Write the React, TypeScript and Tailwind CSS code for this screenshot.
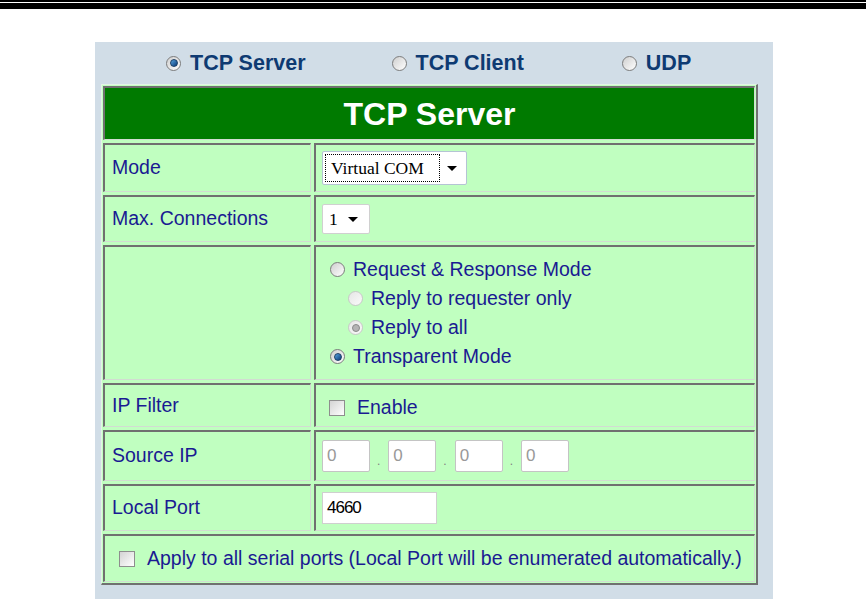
import React from "react";

function Radio({ checked = false, disabled = false }: { checked?: boolean; disabled?: boolean }) {
  return (
    <span
      className={`relative inline-flex h-[15px] w-[15px] shrink-0 items-center justify-center rounded-full border ${
        disabled
          ? "border-[#c8c8c8] bg-gradient-to-br from-[#e6e6e6] to-[#fafafa]"
          : "border-[#7c7c7c] bg-gradient-to-br from-[#cfcfcf] to-[#ffffff]"
      }`}
    >
      {checked && (
        <span
          className={`h-[8px] w-[8px] rounded-full border ${
            disabled
              ? "border-[#8a8a8a] bg-[#b4b4b4]"
              : "border-[#1c3f66] bg-gradient-to-br from-[#5aa6e0] to-[#0a3b78]"
          }`}
        />
      )}
    </span>
  );
}

function Checkbox() {
  return (
    <span className="inline-block h-[16px] w-[16px] shrink-0 border border-[#8e8e8e] bg-gradient-to-br from-[#d4d4d4] to-[#ffffff]" />
  );
}

function Arrow() {
  return <span className="inline-block h-0 w-0 border-x-[5px] border-t-[5px] border-x-transparent border-t-black" />;
}

function Cell({ children, className = "" }: { children?: React.ReactNode; className?: string }) {
  return (
    <div
      className={`border-l-2 border-t-2 border-r border-b border-l-[#707070] border-t-[#707070] border-r-[#d2dcd2] border-b-[#d2dcd2] bg-[#c0ffc0] ${className}`}
    >
      {children}
    </div>
  );
}

function IpBox() {
  return (
    <div className="flex h-[32px] w-[48px] items-center rounded-[2px] border border-[#c4c4c4] bg-white pl-[4px] text-[17px] text-[#999999]">
      0
    </div>
  );
}

function IpDot() {
  return <span className="ml-[7px] mr-[8px] mt-[10px] text-[12px] text-[#808080]">.</span>;
}

export default function App() {
  const label = "flex items-center pl-[7px] text-[19.5px] text-[#1a1a92]";
  return (
    <div className="min-h-[599px] w-[866px] bg-white font-['Liberation_Sans',Arial,sans-serif]">
      <div className="h-[2px] bg-black" />
      <div className="h-[1px] bg-white" />
      <div className="h-[6px] bg-black" />

      <div className="ml-[95px] mt-[33px] h-[557px] w-[678px] bg-[#d1dde7] pt-[8px]">
        <div className="flex h-[26px] items-center text-[21.5px] font-bold text-[#0e3a72]">
          <div className="ml-[71px] flex items-center gap-[9px]">
            <Radio checked />
            <span>TCP Server</span>
          </div>
          <div className="ml-[86px] flex items-center gap-[9px]">
            <Radio />
            <span>TCP Client</span>
          </div>
          <div className="ml-[98px] flex items-center gap-[9px]">
            <Radio />
            <span>UDP</span>
          </div>
        </div>

        <div className="ml-[6px] mt-[8px] w-[657px] border-l border-t border-r-2 border-b-2 border-l-[#e4f4e4] border-t-[#e4f4e4] border-r-[#707070] border-b-[#707070] bg-[#c0ffc0] p-[1px]">
          <div className="grid grid-cols-[208px_1fr] gap-[3px]">
            <Cell className="col-span-2 flex h-[54px] items-center justify-center !bg-[#007a00] text-[32px] font-bold text-white">
              TCP Server
            </Cell>

            <Cell className={`h-[49px] ${label}`}>Mode</Cell>
            <Cell className="flex h-[49px] items-center pl-[6px]">
              <div className="flex h-[34px] w-[145px] items-center rounded-[2px] border border-[#b5c4d4] bg-white px-[2px]">
                <div className="flex h-[28px] w-[115px] items-center border border-dotted border-black pl-[5px] font-['Liberation_Serif',serif] text-[17.5px] text-black">
                  Virtual COM
                </div>
                <div className="mx-auto flex items-center">
                  <Arrow />
                </div>
              </div>
            </Cell>

            <Cell className={`h-[47px] ${label}`}>Max. Connections</Cell>
            <Cell className="flex h-[47px] items-center pl-[6px]">
              <div className="flex h-[30px] w-[48px] items-center gap-[10px] rounded-[2px] border border-[#d0d0d0] bg-white pl-[6px] font-['Liberation_Serif',serif] text-[17.5px] text-black">
                1
                <Arrow />
              </div>
            </Cell>

            <Cell className="h-[135px]" />
            <Cell className="flex h-[135px] flex-col justify-center gap-[8px] pl-[14px] text-[19.5px] leading-[21px] text-[#1a1a92]">
              <div className="flex items-center gap-[8px]">
                <Radio />
                <span>Request &amp; Response Mode</span>
              </div>
              <div className="ml-[18px] flex items-center gap-[8px]">
                <Radio disabled />
                <span>Reply to requester only</span>
              </div>
              <div className="ml-[18px] flex items-center gap-[8px]">
                <Radio checked disabled />
                <span>Reply to all</span>
              </div>
              <div className="flex items-center gap-[8px]">
                <Radio checked />
                <span>Transparent Mode</span>
              </div>
            </Cell>

            <Cell className={`h-[44px] ${label}`}>IP Filter</Cell>
            <Cell className="flex h-[44px] items-center gap-[12px] pl-[13px] pt-[4px] text-[19.5px] text-[#1a1a92]">
              <Checkbox />
              <span>Enable</span>
            </Cell>

            <Cell className={`h-[51px] ${label}`}>Source IP</Cell>
            <Cell className="flex h-[51px] items-center pl-[6px]">
              <IpBox />
              <IpDot />
              <IpBox />
              <IpDot />
              <IpBox />
              <IpDot />
              <IpBox />
            </Cell>

            <Cell className={`h-[47px] ${label}`}>Local Port</Cell>
            <Cell className="flex h-[47px] items-center pl-[6px]">
              <div className="flex h-[32px] w-[115px] items-center border border-[#cfcfcf] bg-white pl-[4px] text-[17px] tracking-[-1px] text-black">
                4660
              </div>
            </Cell>

            <Cell className="col-span-2 flex h-[48px] items-center gap-[12px] pl-[14px] text-[19.5px] text-[#1a1a92]">
              <Checkbox />
              <span>Apply to all serial ports (Local Port will be enumerated automatically.)</span>
            </Cell>
          </div>
        </div>
      </div>
    </div>
  );
}
